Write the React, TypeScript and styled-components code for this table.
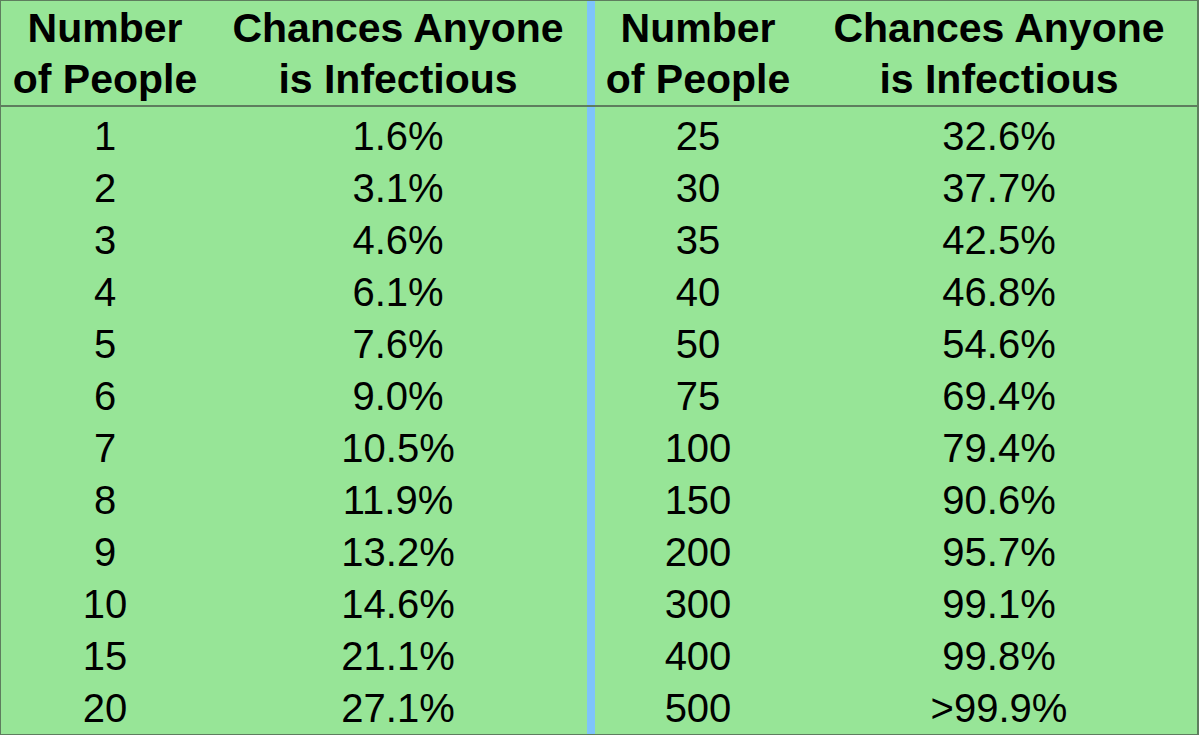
import React from 'react';
import styled, { createGlobalStyle } from 'styled-components';

const GlobalStyle = createGlobalStyle`
  html, body {
    margin: 0;
    padding: 0;
    background: #ffffff;
  }
  body {
    font-family: "Liberation Sans", Arial, sans-serif;
    color: #000;
  }
`;

const COLUMNS = '208px 378px 8px 206px 1fr';

const Table = styled.div`
  width: 1199px;
  height: 735px;
  box-sizing: border-box;
  background: #97e597;
  border: 1px solid #5e7d5e;
  border-right-width: 2px;
  display: flex;
  flex-direction: column;
`;

const HeaderRow = styled.div`
  display: grid;
  grid-template-columns: ${COLUMNS};
  padding-top: 2px;
  border-bottom: 2px solid #5e7d5e;
`;

const HeadCell = styled.div`
  font-weight: 700;
  font-size: 41px;
  line-height: 51px;
  text-align: center;
  white-space: nowrap;
`;

const Divider = styled.div<{ $span?: boolean }>`
  background: #7ec4fb;
  grid-column: 3;
  ${p => (p.$span ? 'grid-row: 1 / -1;' : '')}
  margin-top: ${p => (p.$span ? '-3px' : '-2px')};
`;

const Body = styled.div`
  flex: 1;
  display: grid;
  grid-template-columns: ${COLUMNS};
  grid-template-rows: repeat(12, 52px);
  padding-top: 3px;
`;

const Cell = styled.div`
  font-size: 40px;
  line-height: 52px;
  text-align: center;
  white-space: nowrap;
`;

const left: [string, string][] = [
  ['1', '1.6%'],
  ['2', '3.1%'],
  ['3', '4.6%'],
  ['4', '6.1%'],
  ['5', '7.6%'],
  ['6', '9.0%'],
  ['7', '10.5%'],
  ['8', '11.9%'],
  ['9', '13.2%'],
  ['10', '14.6%'],
  ['15', '21.1%'],
  ['20', '27.1%'],
];

const right: [string, string][] = [
  ['25', '32.6%'],
  ['30', '37.7%'],
  ['35', '42.5%'],
  ['40', '46.8%'],
  ['50', '54.6%'],
  ['75', '69.4%'],
  ['100', '79.4%'],
  ['150', '90.6%'],
  ['200', '95.7%'],
  ['300', '99.1%'],
  ['400', '99.8%'],
  ['500', '>99.9%'],
];

export default function App() {
  return (
    <>
      <GlobalStyle />
      <Table>
        <HeaderRow>
          <HeadCell>Number<br />of People</HeadCell>
          <HeadCell>Chances Anyone<br />is Infectious</HeadCell>
          <Divider />
          <HeadCell>Number<br />of People</HeadCell>
          <HeadCell>Chances Anyone<br />is Infectious</HeadCell>
        </HeaderRow>
        <Body>
          <Divider $span />
          {left.map((row, i) => (
            <React.Fragment key={row[0]}>
              <Cell>{row[0]}</Cell>
              <Cell>{row[1]}</Cell>
              <Cell>{right[i][0]}</Cell>
              <Cell>{right[i][1]}</Cell>
            </React.Fragment>
          ))}
        </Body>
      </Table>
    </>
  );
}
